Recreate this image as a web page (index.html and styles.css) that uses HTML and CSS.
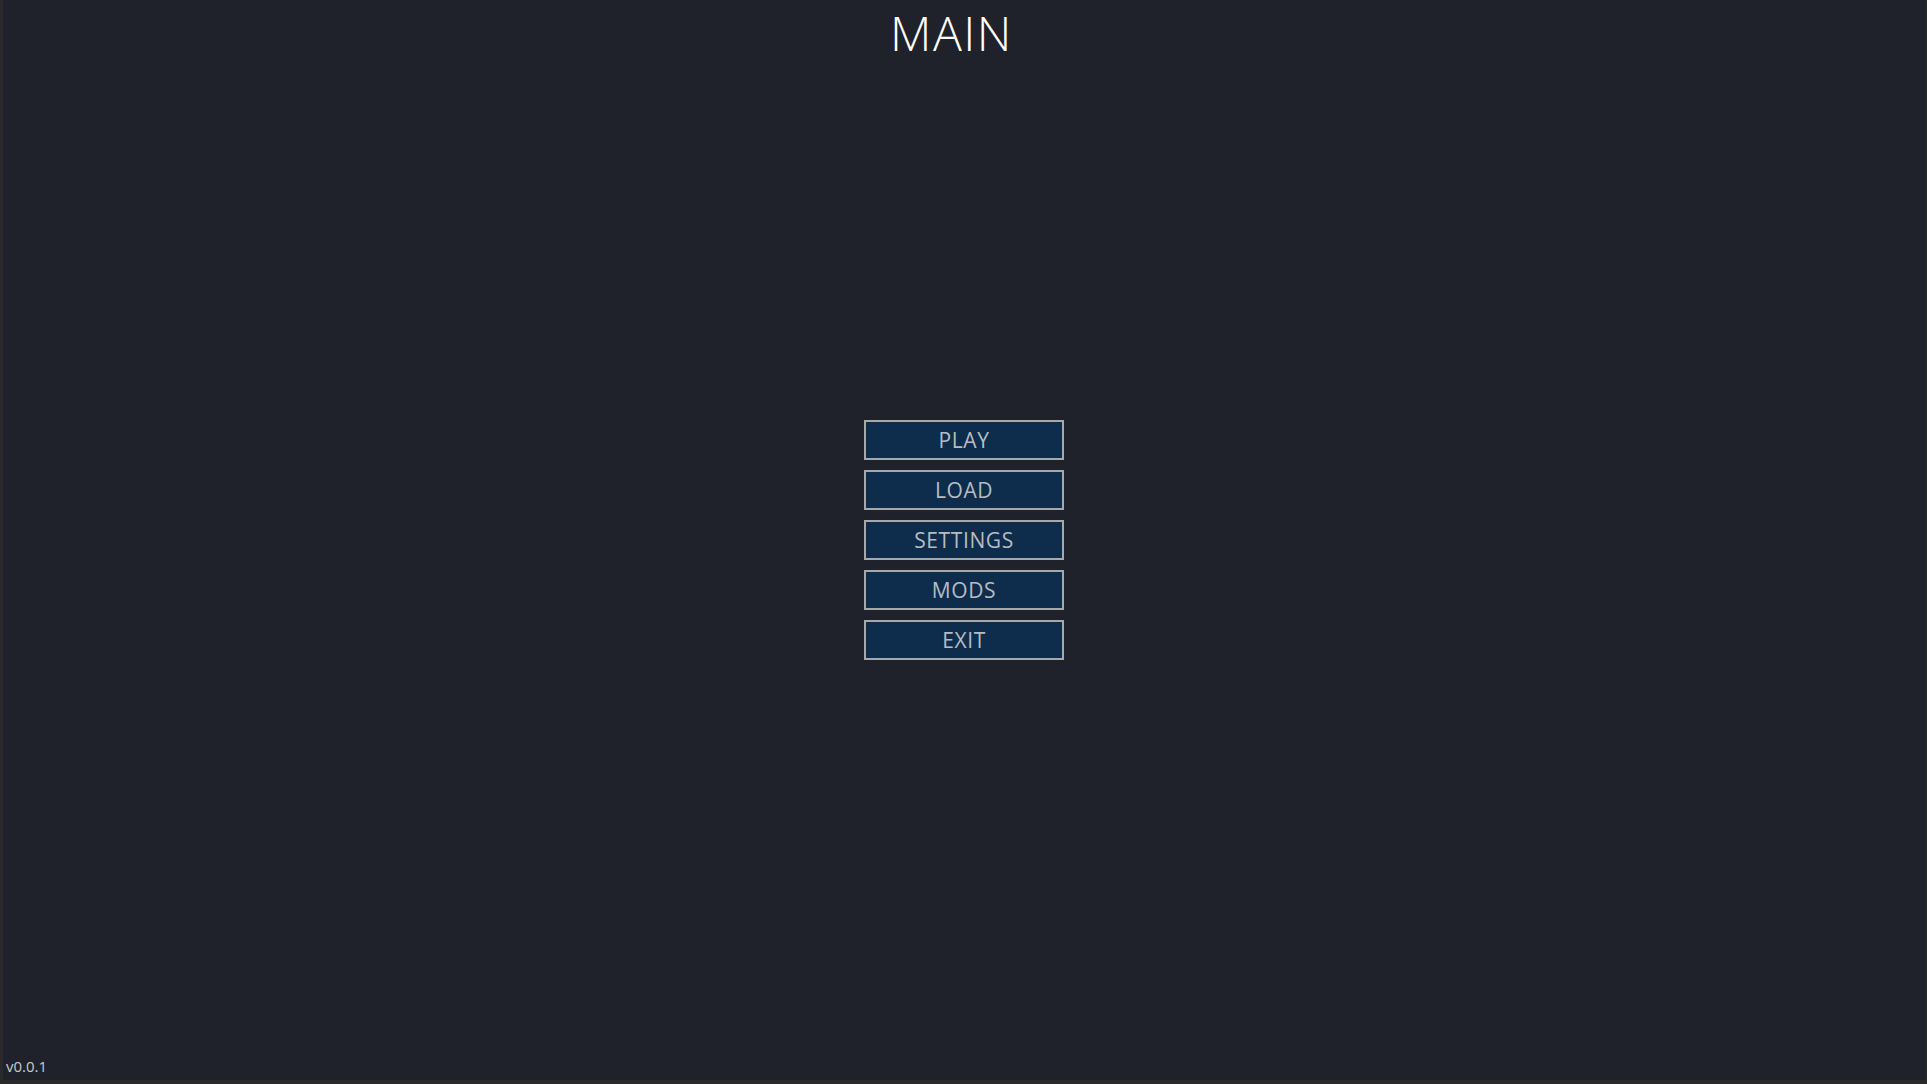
FILE: index.html
```html
<!DOCTYPE html>
<html lang="en">
<head>
<meta charset="utf-8">
<title>Main</title>
<link rel="stylesheet" href="styles.css">
</head>
<body>
<div class="screen">
  <h1 class="title">MAIN</h1>
  <nav class="menu">
    <button class="menu-btn">PLAY</button>
    <button class="menu-btn">LOAD</button>
    <button class="menu-btn">SETTINGS</button>
    <button class="menu-btn">MODS</button>
    <button class="menu-btn">EXIT</button>
  </nav>
  <div class="version">v0.0.1</div>
</div>
</body>
</html>
```
FILE: styles.css
```css
html, body {
  margin: 0;
  padding: 0;
  height: 100%;
  background: #2a2a2b;
}
body {
  font-family: "Open Sans", "DejaVu Sans", sans-serif;
  overflow: hidden;
}
.screen {
  box-sizing: border-box;
  margin-left: 3px;
  margin-right: 1px;
  margin-bottom: 4px;
  height: calc(100vh - 4px);
  background: #1f222a;
  display: grid;
  grid-template-areas: "stack";
}
.title {
  grid-area: stack;
  align-self: start;
  justify-self: center;
  margin: 0;
  padding: 0 26px 0 0;
  font-size: 48px;
  line-height: normal;
  font-weight: 300;
  color: #ffffff;
  letter-spacing: 1.5px;
}
.menu {
  grid-area: stack;
  align-self: center;
  justify-self: center;
  display: flex;
  flex-direction: column;
  gap: 10px;
  margin-left: -1px;
}
.menu-btn {
  box-sizing: border-box;
  width: 200px;
  height: 40px;
  margin: 0;
  padding: 0;
  background: #0e2c4b;
  border: 2px solid #a7a8aa;
  color: #b7bcc3;
  font-family: "Open Sans", "DejaVu Sans", sans-serif;
  font-size: 21px;
  line-height: 36px;
  letter-spacing: 0.6px;
  cursor: pointer;
}
.version {
  grid-area: stack;
  align-self: end;
  justify-self: start;
  padding: 0 0 6px 3px;
  font-size: 15px;
  line-height: 15px;
  color: #c8cbd0;
}
```
